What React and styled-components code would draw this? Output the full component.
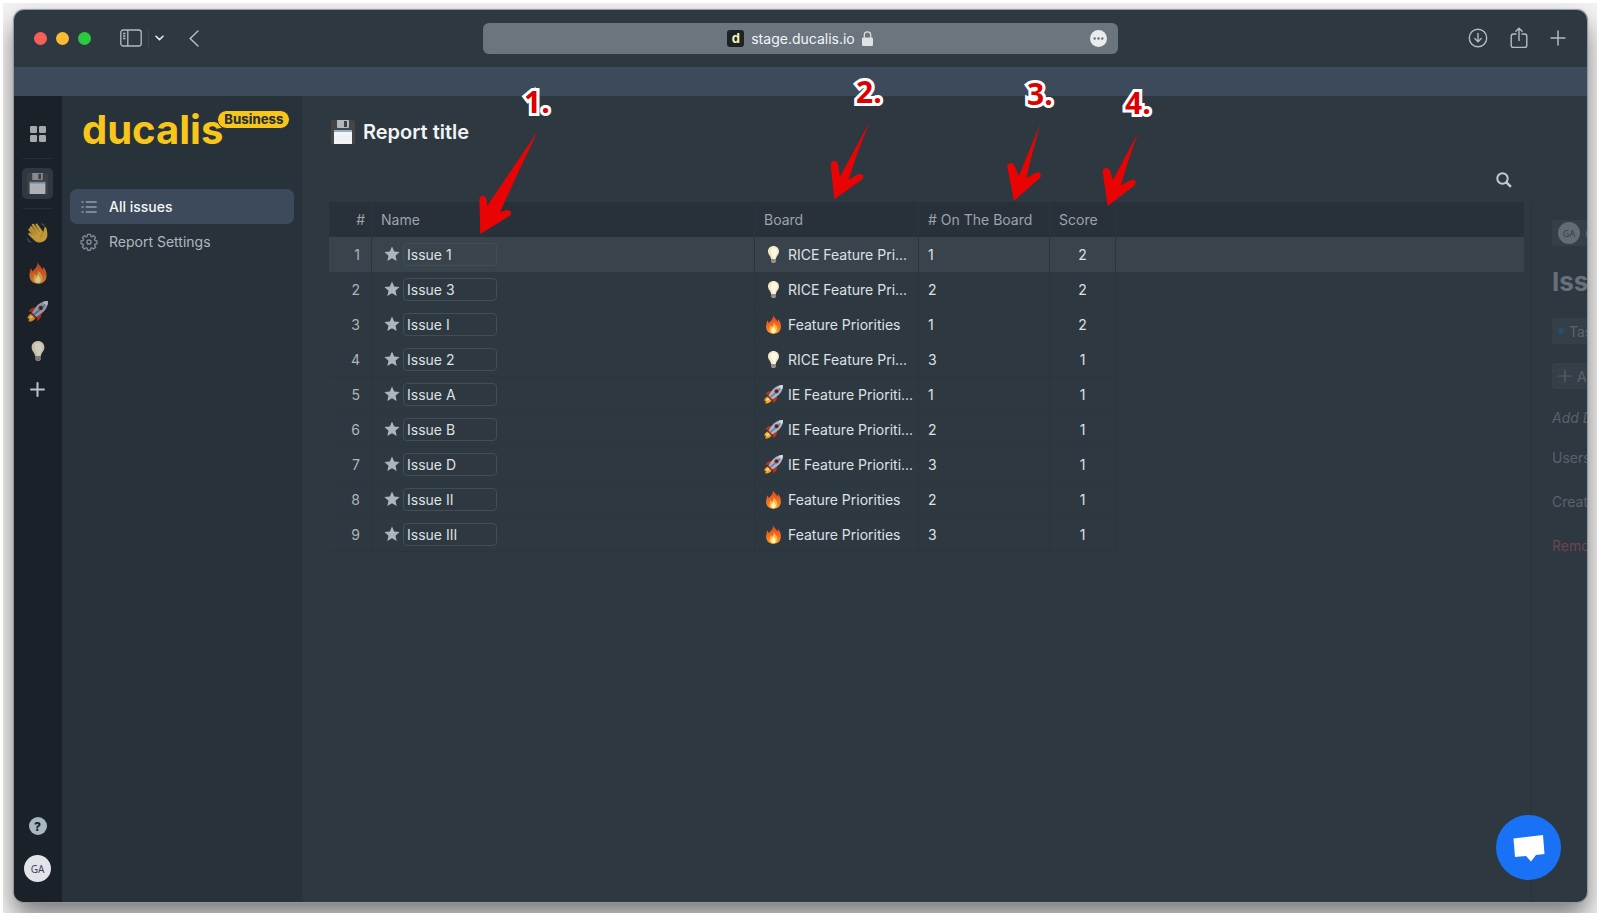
import React, { useState } from 'react'
import styled, { createGlobalStyle } from 'styled-components'

const GlobalStyle = createGlobalStyle`
  * {
    box-sizing: border-box;
  }
  body {
    margin: 0;
    background: #ffffff;
    font-family: Inter, "Liberation Sans", sans-serif;
    font-size: 14px;
    color: #d5dade;
  }
  button, input {
    font: inherit;
    color: inherit;
    background: none;
    border: none;
    padding: 0;
    margin: 0;
  }
  button {
    cursor: pointer;
    display: flex;
    align-items: center;
    justify-content: center;
  }
  svg {
    display: block;
    flex: none;
  }
`

const Page = styled.div`
  min-height: 100vh;
  padding: 3px 3px 4px;
  display: flex;
`

const Backdrop = styled.div`
  flex: 1;
  min-width: 0;
  display: flex;
  padding: 7px 10px 11px 11px;
  overflow: hidden;
  background: #f4f2f3;
`

const Window = styled.div`
  position: relative;
  flex: 1;
  min-width: 0;
  display: flex;
  flex-direction: column;
  overflow: hidden;
  border-radius: 10px;
  background: #2e3841;
  box-shadow: 0 0 1px 1px #8e9698, 0 14px 26px rgba(0, 0, 0, 0.5);
`

/* browser chrome */
const TitleBar = styled.header`
  height: 57px;
  display: grid;
  grid-template-columns: 1fr minmax(0, 635px) 1fr;
  align-items: center;
  padding: 0 21px 1px 20px;
  color: #b4bbc1;
`

const BarSide = styled.div`
  display: flex;
  align-items: center;
  justify-content: ${(p) => (p.$end ? 'flex-end' : 'flex-start')};
  gap: ${(p) => (p.$end ? '21px' : '0')};
`

const Lights = styled.div`
  display: flex;
  gap: 9px;
  margin-right: 29px;
`

const Light = styled.span`
  width: 13px;
  height: 13px;
  border-radius: 50%;
  background: ${(p) => p.$color};
`

const BarDivider = styled.span`
  width: 1px;
  height: 20px;
  margin: 0 6px;
  background: #39434c;
`

const BackButton = styled.button`
  margin-left: 25px;
`

const AddressBar = styled.div`
  height: 31px;
  border-radius: 6px;
  background: #6b757e;
  display: grid;
  grid-template-columns: 1fr auto 1fr;
  align-items: center;
  padding: 0 11px;
`

const Address = styled.div`
  grid-column: 2;
  display: flex;
  align-items: center;
  gap: 7px;
  color: #f2f4f5;
`

const Favicon = styled.span`
  width: 17px;
  height: 17px;
  border-radius: 3px;
  background: #1d2226;
  color: #f3f1b4;
  font-weight: 700;
  font-size: 13px;
  line-height: 16px;
  text-align: center;
`

const MoreButton = styled.button`
  justify-self: end;
`

const Banner = styled.div`
  height: 29px;
  background: #3c4a5b;
`

/* app */
const AppBody = styled.div`
  flex: 1;
  display: flex;
  min-width: 0;
`

const Rail = styled.nav`
  width: 48px;
  flex: none;
  display: flex;
  flex-direction: column;
  align-items: center;
  padding: 18px 1px 20px 0;
  background: #1b2129;
  color: #b9c2ca;
`

const RailButton = styled.button`
  width: 31px;
  height: 39px;
  opacity: ${(p) => (p.$dim ? 0.8 : 1)};
`

const RailActive = styled.button`
  width: 31px;
  height: 31px;
  border-radius: 5px;
  background: #2f3740;

  svg {
    opacity: 0.65;
  }
`

const RailLine = styled.span`
  width: 29px;
  height: 1px;
  margin: ${(p) => (p.$first ? '5px 0 9px' : '9px 0 5px')};
  background: #272e36;
`

const RailSpace = styled.span`
  flex: 1;
`

const HelpButton = styled.button`
  width: 18px;
  height: 18px;
  margin-bottom: 20px;
  border-radius: 50%;
  background: #a9b7c0;
  color: #1b2129;
  font-weight: 800;
  font-size: 12px;
`

const Avatar = styled.span`
  width: ${(p) => p.$size}px;
  height: ${(p) => p.$size}px;
  flex: none;
  display: flex;
  align-items: center;
  justify-content: center;
  border-radius: 50%;
  background: ${(p) => (p.$faded ? '#636b74' : '#e3e3ea')};
  color: ${(p) => (p.$faded ? '#343d47' : '#3c4357')};
  font-family: "Noto Sans", sans-serif;
  font-size: ${(p) => (p.$faded ? '9px' : '10px')};
`

const Sidebar = styled.aside`
  width: 241px;
  flex: none;
  padding: 13px 8px 0;
  background: #28323a;
  border-right: 1px solid #2a343c;
`

const Brand = styled.div`
  display: flex;
  align-items: flex-start;
  height: 80px;
  padding-left: 12px;
`

const BrandName = styled.span`
  color: #f8c61b;
  font-weight: 700;
  font-size: 40px;
  line-height: 42px;
`

const Plan = styled.span`
  position: relative;
  z-index: 1;
  height: 19px;
  margin: 1px 0 0 -6px;
  padding: 0 6px;
  border: 1px solid #28323a;
  border-radius: 10px;
  background: #f8c61b;
  color: #28323a;
  font-weight: 800;
  font-size: 13px;
  line-height: 17px;
`

const MenuItem = styled.a`
  display: flex;
  align-items: center;
  gap: 11px;
  height: 35px;
  padding: 0 10px;
  border-radius: 7px;
  text-decoration: none;
  background: ${(p) => (p.$active ? '#3c4a5b' : 'transparent')};
  color: ${(p) => (p.$active ? '#f4f6f7' : '#b0b8bf')};
  font-weight: ${(p) => (p.$active ? 500 : 400)};

  svg {
    color: #7d8996;
  }
`

const Main = styled.main`
  flex: 1;
  min-width: 0;
  display: flex;
  flex-direction: column;
  padding: 19px 0 0 26px;
`

const Heading = styled.div`
  display: flex;
  align-items: center;
  gap: 8px;
  height: 34px;
  padding-left: 2px;
`

const Title = styled.h1`
  margin: 0;
  font-weight: 600;
  font-size: 20px;
  color: #f1f3f4;
`

const Toolbar = styled.div`
  display: flex;
  justify-content: flex-end;
  align-items: center;
  height: 53px;
  padding: 8px 75px 0 0;
  color: #c3cad0;
`

const Content = styled.div`
  flex: 1;
  display: flex;
  min-width: 0;
`

const TableWrap = styled.div`
  flex: 1;
  min-width: 0;
  padding-right: 7px;
`

const Table = styled.table`
  width: 100%;
  table-layout: fixed;
  border-collapse: separate;
  border-spacing: 0;
`

const Col = styled.col`
  width: ${(p) => (p.$width ? `${p.$width}px` : 'auto')};
`

const Th = styled.th`
  height: 35px;
  padding: 0 ${(p) => (p.$align === 'right' ? '6px' : '9px')};
  background: #28313a;
  border-right: 1px solid #2b353d;
  color: #9da4aa;
  font-weight: 400;
  text-align: ${(p) => p.$align || 'left'};
  white-space: nowrap;

  &:last-child {
    border-right: none;
  }
`

const Row = styled.tr`
  background: ${(p) => (p.$active ? '#39434c' : 'transparent')};
`

const Td = styled.td`
  height: 35px;
  padding: 0 ${(p) => (p.$align === 'right' ? '11px' : '9px')};
  border-right: 1px solid #2a343c;
  border-bottom: 1px solid ${(p) => (p.$active ? '#39434c' : '#2b353d')};
  color: ${(p) => (p.$muted ? '#adb5bb' : '#dde1e4')};
  text-align: ${(p) => p.$align || 'left'};

  &:last-child {
    border: none;
  }
`

const NameCell = styled.div`
  display: flex;
  align-items: center;
  gap: 3px;
  padding-left: 3px;
`

const StarButton = styled.button`
  color: #adb4ba;
`

const NameInput = styled.input`
  width: 94px;
  height: 23px;
  padding: 0 3px;
  border: 1px solid #434d56;
  border-radius: 4px;
`

const BoardCell = styled.div`
  display: flex;
  align-items: center;
  gap: 5px;
  margin-right: -9px;
`

const BoardName = styled.span`
  white-space: nowrap;
`

/* the issue card, still sliding in from the right edge */
const Detail = styled.aside`
  width: 56px;
  flex: none;
  overflow: hidden;
  white-space: nowrap;
  padding: 18px 0 0 20px;
  border-left: 1px solid #29333b;
  color: #5a636c;
`

const Chip = styled.div`
  display: flex;
  align-items: center;
  gap: 5px;
  width: 120px;
  height: 26px;
  margin-bottom: 19px;
  padding: 0 6px;
  border-radius: 3px;
  background: #353f48;
`

const Dot = styled.span`
  width: 6px;
  height: 6px;
  flex: none;
  border-radius: 50%;
  background: #24506f;
`

const DetailTitle = styled.h2`
  margin: 0 0 20px;
  font-weight: 700;
  font-size: 26px;
  line-height: 33px;
  color: #68707a;
`

const DetailLine = styled.p`
  margin: 0 0 ${(p) => (p.$italic ? '20px' : '24px')};
  line-height: 20px;
  font-style: ${(p) => (p.$italic ? 'italic' : 'normal')};
  color: ${(p) => (p.$danger ? '#71434f' : '#59626b')};
`

const ChatButton = styled.button`
  position: absolute;
  right: 26px;
  bottom: 22px;
  width: 65px;
  height: 65px;
  border-radius: 50%;
  background: #1972f5;
`

/* numbered callouts over the page */
const CalloutLabel = styled.span`
  position: absolute;
  left: ${(p) => p.$x}px;
  top: ${(p) => p.$y}px;
  font-family: "Open Sans", sans-serif;
  font-weight: 700;
  font-size: 30px;
  line-height: 30px;
  color: #dc0000;
  -webkit-text-stroke: 6px #ffffff;
  stroke-linejoin: round;
  paint-order: stroke fill;
  pointer-events: none;
`

const CalloutArrow = styled.svg`
  position: absolute;
  left: ${(p) => p.$x}px;
  top: ${(p) => p.$y}px;
  fill: #ea0303;
  pointer-events: none;
`

const FloppyIcon = ({ size = 24 }) => (
  <svg width={size} height={size} viewBox="0 0 24 24">
    <path d="M1 0h21l2 2v21a1 1 0 0 1-1 1H1a1 1 0 0 1-1-1V1a1 1 0 0 1 1-1z" fill="#454545" />
    <path d="M6 0h12v7a1 1 0 0 1-1 1H7a1 1 0 0 1-1-1z" fill="#b5b8ba" />
    <path d="M13 1h3v6h-3z" fill="#3d4245" />
    <path d="M3 11h18v13H3z" fill="#f3f4f5" />
    <path d="M3 10h18v2H3z" fill="#8db2d0" />
    <path d="M3 17h18M3 20h18" stroke="#e4e6e8" strokeWidth=".5" />
  </svg>
)

const WaveIcon = ({ size = 23 }) => (
  <svg width={size} height={size} viewBox="0 0 24 24">
    <path
      d="M4 5c1-1.200 2.200-.6 3 .4l4 4.600-4.700-6.300c-.8-1.300 1-2.500 2-1.300l5.300 6.300-3.600-5.600c-.7-1.300 1-2.300 1.900-1.100l6.100 8.400c.8-1.200.5-2.600.9-3.900.4-1.500 2.300-1.300 2.500.1.500 3.800 2.300 8.200-.9 11.900-3.200 3.700-8.500 3.900-12 .5L2.800 13.300c-1.200-1.300.3-2.800 1.600-1.800L7.500 14 2.700 8.600C1.700 7.400 3 6 4.200 7l5 4.700L4 6.600z"
      fill="#eab83c"
    />
    <path d="M6 6l5.500 6.200M9 3.700l5.200 6.800M5 9l4.800 4.800M18.500 11c-2 1-3 3-2.500 5" stroke="#b3801f" strokeWidth=".7" fill="none" />
    <path d="M1.500 16.500c.4 2.600 1.600 4.100 4 4.700M16 1.700c1.900.5 3 1.700 3.600 3.400" stroke="#565b58" strokeWidth="1.200" fill="none" />
  </svg>
)

const FireIcon = ({ size = 20 }) => (
  <svg width={size} height={size} viewBox="0 0 20 20">
    <defs>
      <linearGradient id="flame" x1="0" y1="0" x2="0" y2="1">
        <stop offset="0" stopColor="#d9431c" />
        <stop offset=".55" stopColor="#f26a25" />
        <stop offset="1" stopColor="#f79a2b" />
      </linearGradient>
    </defs>
    <path d="M9.500 0c.8 2.800 3.500 4.200 4.800 6.900.5-.9.500-1.800.2-2.900 2.400 2.200 3.500 5.500 3.300 8.700-.2 4.300-3.300 7.100-7.700 7.100-4.600 0-7.700-2.900-7.900-7.200-.1-3 1.100-4.700 1.200-7 .9.900 1.400 1.900 1.500 3C7.300 6.400 9.800 3.800 9.500 0z" fill="url(#flame)" />
    <path d="M10.300 6.500c0 3 3.900 4 3.900 8.300 0 3-1.700 4.600-4.200 4.600s-4.200-1.600-4.200-4.200c0-2 1-2.900 1.200-4.500.8.5 1.200 1.200 1.300 2 1.400-1.500 2.400-3.600 2-6.200z" fill="#fbb83b" />
    <path d="M10.400 11.500c.3 2 2 2.500 2 4.700 0 1.900-.9 3-2.500 3s-2.500-1.200-2.500-2.800c0-1.900 2.400-2.500 3-4.900z" fill="#fff3b0" />
  </svg>
)

const RocketIcon = ({ size = 20 }) => (
  <svg width={size} height={size} viewBox="0 0 20 20">
    <path d="M9 6.500C5.500 5.700 3.300 7 1.500 10l4.300.5zM13.400 11c.8 3.600-.5 6.200-3.600 8l-.5-4.400z" fill="#c9301c" />
    <path d="M4.500 11.800C2.300 12.500.7 14 .2 16.500l2 .2c-.6.9-.8 1.700-.7 2.800 2.800.3 5.700-1 6.700-3.900z" fill="#f5a623" />
    <path d="M4.800 13.500c-1.300.5-2.100 1.500-2.500 3 1.600 0 3-.7 3.900-1.800z" fill="#ffe68a" />
    <path d="M20 0c-5.500.2-9.500 2.600-12.200 6.600L4.700 11.300l4 4 4.700-3.200C17.500 9.300 19.800 5.500 20 0z" fill="#a9b8c6" />
    <path d="M18.800 1.200 5.700 12.300l1.500 1.500 6-5c3.500-2.900 5-4.900 5.600-7.600z" fill="#6489b5" />
    <path d="M20 0c-1.900.1-3.500.4-5 1l4 4c.6-1.500 1-3.100 1-5z" fill="#d5dbe0" />
    <circle cx="13.200" cy="6.600" r="2.300" fill="#b3302a" />
    <circle cx="13.200" cy="6.600" r="1.400" fill="#26292d" />
    <path d="m4.300 10.700 5 5-1.500 1-4.500-4.500z" fill="#a32c1c" />
  </svg>
)

const BulbIcon = ({ size = 20 }) => (
  <svg width={size} height={size} viewBox="0 0 20 20">
    <path d="M10 1c3.400 0 5.800 2.400 5.800 5.600 0 3.700-2.900 4.700-3.300 8.400h-5C7.100 11.300 4.200 10.300 4.200 6.600 4.200 3.400 6.600 1 10 1z" fill="#f2e7c3" />
    <path d="M10 2.500c2.400 0 4 1.700 4 3.900 0 2.900-2.300 4.300-2.700 8.100H9.500C9.400 10.500 7 9 7 6.200c0-2.200 1-3.700 3-3.700z" fill="#fdf8e4" />
    <path d="M7.500 15h5v2.700L11.300 19H8.700l-1.200-1.300z" fill="#a2a297" />
    <path d="M7.500 16.300h5M7.800 17.700h4.400" stroke="#717168" strokeWidth=".5" />
  </svg>
)

const GridIcon = () => (
  <svg width="16" height="16" viewBox="0 0 16 16" fill="#a5a9ae">
    <rect width="7" height="7" rx="1.200" />
    <rect x="9" width="7" height="7" rx="1.200" />
    <rect y="9" width="7" height="7" rx="1.200" />
    <rect x="9" y="9" width="7" height="7" rx="1.200" />
  </svg>
)

const PlusIcon = ({ size = 15, weight = 2 }) => (
  <svg width={size} height={size} viewBox="0 0 15 15" stroke="currentColor" strokeWidth={weight} strokeLinecap="round">
    <path d="M7.500 1v13M1 7.500h13" />
  </svg>
)

const ListIcon = () => (
  <svg width="18" height="18" viewBox="0 0 18 18" fill="none" stroke="currentColor" strokeWidth="1.800" strokeLinecap="round">
    <path d="M6.500 4h9.500M6.500 9h9.500M6.500 14h9.500M2.300 4h.6M2.300 9h.6M2.300 14h.6" />
  </svg>
)

// eight rounded teeth around the hub
const GearIcon = () => (
  <svg width="18" height="18" viewBox="0 0 24 24" fill="none" stroke="currentColor" strokeWidth="2" strokeLinejoin="round">
    <path d="M9.900 1.500h4.200l.6 3 1.500.7 2.600-1.700 2.900 2.900-1.700 2.600.6 1.500 3 .6v4.200l-3 .6-.6 1.500 1.700 2.600-2.900 2.900-2.600-1.700-1.500.6-.6 3H9.900l-.6-3-1.500-.6-2.600 1.700-2.900-2.900L4 17.400l-.6-1.500-3-.6v-4.200l3-.6L4 9 2.300 6.400l2.900-2.900 2.600 1.700 1.500-.7z" transform="translate(1.100 .4) scale(.91)" />
    <circle cx="12" cy="12" r="2.800" />
  </svg>
)

const StarIcon = () => (
  <svg width="16" height="16" viewBox="0 0 16 16" fill="currentColor">
    <path d="m8 .6 2.200 5 5.400.5-4.100 3.600 1.200 5.400L8 12.300l-4.700 2.800 1.200-5.400L.4 6.100l5.400-.5z" />
  </svg>
)

const SearchIcon = () => (
  <svg width="16" height="16" viewBox="0 0 16 16" fill="none" stroke="currentColor">
    <circle cx="6.500" cy="6.500" r="5.200" strokeWidth="2" />
    <path d="m10.400 10.400 4.500 4.500" strokeWidth="2.600" />
  </svg>
)

const EMOJI = { bulb: BulbIcon, fire: FireIcon, rocket: RocketIcon }

const ISSUES = [
  { name: 'Issue 1', icon: 'bulb', board: 'RICE Feature Pri...', place: 1, score: 2 },
  { name: 'Issue 3', icon: 'bulb', board: 'RICE Feature Pri...', place: 2, score: 2 },
  { name: 'Issue I', icon: 'fire', board: 'Feature Priorities', place: 1, score: 2 },
  { name: 'Issue 2', icon: 'bulb', board: 'RICE Feature Pri...', place: 3, score: 1 },
  { name: 'Issue A', icon: 'rocket', board: 'IE Feature Prioriti...', place: 1, score: 1 },
  { name: 'Issue B', icon: 'rocket', board: 'IE Feature Prioriti...', place: 2, score: 1 },
  { name: 'Issue D', icon: 'rocket', board: 'IE Feature Prioriti...', place: 3, score: 1 },
  { name: 'Issue II', icon: 'fire', board: 'Feature Priorities', place: 2, score: 1 },
  { name: 'Issue III', icon: 'fire', board: 'Feature Priorities', place: 3, score: 1 },
]

const CALLOUTS = [
  {
    text: '1.', labelX: 510, labelY: 77, x: 463, y: 119, w: 62, h: 108, box: '471 120 186 324',
    path: 'M653 127 502 350 499 328Q495 319 487 320 479 321 478 332L481 435 569 380Q575 376 573 369 569 362 558 364L540 369Q590 260 653 127z',
  },
  {
    text: '2.', labelX: 842, labelY: 67, x: 814, y: 109, w: 44, h: 82, box: '264 90 132 246',
    path: 'M389 98 300 263 294 226Q290 215 282 216 272 217 272 228L283 331 367 271Q373 264 368 257 363 253 354 256L325 273Q350 195 389 98z',
  },
  {
    text: '3.', labelX: 1013, labelY: 69, x: 991, y: 111, w: 39, h: 81, box: '795 96 117 243',
    path: 'M902 103 836 262 824 230Q819 221 810 222 801 224 802 234L822 335 899 268Q905 261 901 254 896 248 887 251L859 268Q875 195 902 103z',
  },
  {
    text: '4.', labelX: 1111, labelY: 78, x: 1086, y: 121, w: 39, h: 76, box: '1080 126 117 228',
    path: 'M1194 132 1119 273 1110 245Q1105 236 1097 237 1087 239 1088 249L1103 351 1184 289Q1190 283 1186 276 1181 270 1172 274L1143 289Q1162 218 1194 132z',
  },
]

const Chrome = () => (
  <TitleBar>
    <BarSide>
      <Lights>
        <Light $color="#f95f57" />
        <Light $color="#fcbb2f" />
        <Light $color="#2bc840" />
      </Lights>
      <button aria-label="Show sidebar">
        <svg width="22" height="18" viewBox="0 0 22 18" fill="none" stroke="currentColor" strokeWidth="1.300">
          <rect x=".8" y="1" width="20.400" height="16" rx="2.500" />
          <path d="M7.800 1v16M3 4.500h2.500M3 7h2.500M3 9.500h2.500" />
        </svg>
      </button>
      <BarDivider />
      <button aria-label="Tab groups">
        <svg width="9" height="6" viewBox="0 0 9 6" fill="none" stroke="#e3e6e8" strokeWidth="1.600" strokeLinecap="round">
          <path d="m1 1.200 3.500 3.400L8 1.200" />
        </svg>
      </button>
      <BackButton aria-label="Back">
        <svg width="10" height="17" viewBox="0 0 10 17" fill="none" stroke="currentColor" strokeWidth="1.500" strokeLinecap="round">
          <path d="M9 1 1.200 8.500 9 16" />
        </svg>
      </BackButton>
    </BarSide>
    <AddressBar>
      <Address>
        <Favicon>d</Favicon>
        <span>stage.ducalis.io</span>
        <svg width="11" height="15" viewBox="0 0 11 15">
          <rect y="6.500" width="11" height="8.500" rx="1.300" fill="#dfe2e4" />
          <path d="M2.300 7V4c0-4.200 6.400-4.200 6.400 0v3" fill="none" stroke="#dfe2e4" strokeWidth="1.200" />
        </svg>
      </Address>
      <MoreButton aria-label="Page options">
        <svg width="17" height="17" viewBox="0 0 17 17">
          <circle cx="8.500" cy="8.500" r="8.500" fill="#e9ebec" />
          <g fill="#6b757e">
            <circle cx="4.700" cy="8.500" r="1.200" />
            <circle cx="8.500" cy="8.500" r="1.200" />
            <circle cx="12.300" cy="8.500" r="1.200" />
          </g>
        </svg>
      </MoreButton>
    </AddressBar>
    <BarSide $end>
      <button aria-label="Downloads">
        <svg width="20" height="20" viewBox="0 0 20 20" fill="none" stroke="currentColor" strokeWidth="1.400" strokeLinecap="round">
          <circle cx="10" cy="10" r="8.700" />
          <path d="M10 5.500v8M6.800 10.600l3.200 3.100 3.200-3.100" />
        </svg>
      </button>
      <button aria-label="Share">
        <svg width="20" height="22" viewBox="0 0 20 22" fill="none" stroke="currentColor" strokeWidth="1.400" strokeLinecap="round">
          <path d="M7 7H4.500Q2.200 7 2.200 9.200v9q0 2.200 2.300 2.200h11q2.300 0 2.300-2.200v-9Q17.800 7 15.500 7H13M10 13.500V1.500M6.900 4.300 10 1.300l3.100 3" />
        </svg>
      </button>
      <button aria-label="New tab">
        <PlusIcon size={16} weight={1.4} />
      </button>
    </BarSide>
  </TitleBar>
)

const App = () => {
  const [selected, setSelected] = useState(0)

  return (
    <Page>
      <GlobalStyle />
      <Backdrop>
        <Window>
          <Chrome />
          <Banner />
          <AppBody>
            <Rail>
              <RailButton aria-label="Boards"><GridIcon /></RailButton>
              <RailLine $first />
              <RailActive aria-label="Report"><FloppyIcon size={21} /></RailActive>
              <RailLine />
              <RailButton $dim aria-label="Welcome board"><WaveIcon /></RailButton>
              <RailButton $dim aria-label="Feature Priorities"><FireIcon size={22} /></RailButton>
              <RailButton $dim aria-label="IE Feature Priorities"><RocketIcon size={21} /></RailButton>
              <RailButton $dim aria-label="RICE Feature Priorities"><BulbIcon size={22} /></RailButton>
              <RailButton aria-label="Add board"><PlusIcon /></RailButton>
              <RailSpace />
              <HelpButton>?</HelpButton>
              <Avatar $size={27}>GA</Avatar>
            </Rail>
            <Sidebar>
              <Brand>
                <BrandName>ducalis</BrandName>
                <Plan>Business</Plan>
              </Brand>
              <MenuItem href="#issues" $active><ListIcon />All issues</MenuItem>
              <MenuItem href="#settings"><GearIcon />Report Settings</MenuItem>
            </Sidebar>
            <Main>
              <Heading>
                <FloppyIcon />
                <Title>Report title</Title>
              </Heading>
              <Toolbar>
                <button aria-label="Search"><SearchIcon /></button>
              </Toolbar>
              <Content>
                <TableWrap>
                  <Table>
                    <colgroup>
                      <Col $width={43} />
                      <Col $width={383} />
                      <Col $width={164} />
                      <Col $width={131} />
                      <Col $width={66} />
                      <Col />
                    </colgroup>
                    <thead>
                      <tr>
                        <Th $align="right">#</Th>
                        <Th>Name</Th>
                        <Th>Board</Th>
                        <Th># On The Board</Th>
                        <Th>Score</Th>
                        <Th />
                      </tr>
                    </thead>
                    <tbody>
                      {ISSUES.map((issue, i) => {
                        const Icon = EMOJI[issue.icon]
                        const active = selected === i
                        return (
                          <Row key={issue.name} $active={active} onClick={() => setSelected(i)}>
                            <Td $align="right" $muted $active={active}>{i + 1}</Td>
                            <Td $active={active}>
                              <NameCell>
                                <StarButton aria-label={`Star ${issue.name}`}><StarIcon /></StarButton>
                                <NameInput aria-label="Issue name" defaultValue={issue.name} />
                              </NameCell>
                            </Td>
                            <Td $active={active}>
                              <BoardCell>
                                <Icon size={19} />
                                <BoardName>{issue.board}</BoardName>
                              </BoardCell>
                            </Td>
                            <Td $active={active}>{issue.place}</Td>
                            <Td $align="center" $active={active}>{issue.score}</Td>
                            <Td $active={active} />
                          </Row>
                        )
                      })}
                    </tbody>
                  </Table>
                </TableWrap>
                <Detail>
                  <Chip><Avatar $size={22} $faded>GA</Avatar>G</Chip>
                  <DetailTitle>Iss</DetailTitle>
                  <Chip><Dot />Tas</Chip>
                  <Chip><PlusIcon size={14} weight={1.3} />A</Chip>
                  <DetailLine $italic>Add D</DetailLine>
                  <DetailLine>Users</DetailLine>
                  <DetailLine>Creat</DetailLine>
                  <DetailLine $danger>Remo</DetailLine>
                </Detail>
              </Content>
            </Main>
          </AppBody>
          <ChatButton aria-label="Open chat">
            <svg width="32" height="28" viewBox="0 0 32 28" fill="#ffffff">
              <path d="M.5 4.500 30 1l1.500 19-8.500.9-5 6.600-5-5.600-11 1.100z" />
            </svg>
          </ChatButton>
          {CALLOUTS.map((c) => (
            <React.Fragment key={c.text}>
              <CalloutLabel $x={c.labelX} $y={c.labelY}>{c.text}</CalloutLabel>
              <CalloutArrow $x={c.x} $y={c.y} width={c.w} height={c.h} viewBox={c.box}>
                <path d={c.path} />
              </CalloutArrow>
            </React.Fragment>
          ))}
        </Window>
      </Backdrop>
    </Page>
  )
}

export default App
